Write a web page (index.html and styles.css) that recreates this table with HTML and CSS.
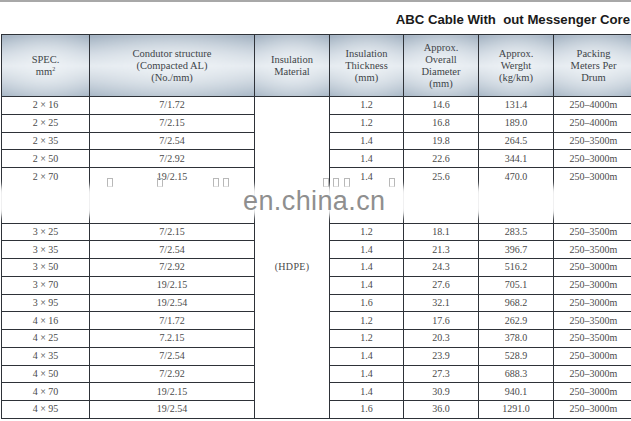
FILE: index.html
```html
<!DOCTYPE html>
<html>
<head>
<meta charset="utf-8">
<link rel="stylesheet" href="styles.css">
</head>
<body>
<div class="page">
  <div class="topline"></div>
  <div class="titlebar"><h1 class="title">ABC Cable With&nbsp; out Messenger Core</h1></div>
  <table class="spec">
    <colgroup>
      <col class="c1"><col class="c2"><col class="c3"><col class="c4"><col class="c5"><col class="c6"><col class="c7">
    </colgroup>
    <thead>
      <tr class="head">
        <th>SPEC.<br>mm<sup>2</sup></th>
        <th>Condutor structure<br>(Compacted AL)<br>(No./mm)</th>
        <th>Insulation<br>Material</th>
        <th>Insulation<br>Thickness<br>(mm)</th>
        <th>Approx.<br>Overall<br>Diameter<br>(mm)</th>
        <th>Approx.<br>Werght<br>(kg/km)</th>
        <th>Packing<br>Meters Per<br>Drum</th>
      </tr>
    </thead>
    <tbody>
      <tr><td>2 × 16</td><td>7/1.72</td><td class="mat" rowspan="17">(HDPE)</td><td>1.2</td><td>14.6</td><td>131.4</td><td>250–4000m</td></tr>
      <tr><td>2 × 25</td><td>7/2.15</td><td>1.2</td><td>16.8</td><td>189.0</td><td>250–4000m</td></tr>
      <tr><td>2 × 35</td><td>7/2.54</td><td>1.4</td><td>19.8</td><td>264.5</td><td>250–3500m</td></tr>
      <tr><td>2 × 50</td><td>7/2.92</td><td>1.4</td><td>22.6</td><td>344.1</td><td>250–3000m</td></tr>
      <tr class="tall"><td>2 × 70</td><td>19/2.15</td><td>1.4</td><td>25.6</td><td>470.0</td><td>250–3000m</td></tr>
      <tr><td>3 × 25</td><td>7/2.15</td><td>1.2</td><td>18.1</td><td>283.5</td><td>250–3500m</td></tr>
      <tr><td>3 × 35</td><td>7/2.54</td><td>1.4</td><td>21.3</td><td>396.7</td><td>250–3500m</td></tr>
      <tr><td>3 × 50</td><td>7/2.92</td><td>1.4</td><td>24.3</td><td>516.2</td><td>250–3000m</td></tr>
      <tr><td>3 × 70</td><td>19/2.15</td><td>1.4</td><td>27.6</td><td>705.1</td><td>250–3000m</td></tr>
      <tr><td>3 × 95</td><td>19/2.54</td><td>1.6</td><td>32.1</td><td>968.2</td><td>250–3000m</td></tr>
      <tr><td>4 × 16</td><td>7/1.72</td><td>1.2</td><td>17.6</td><td>262.9</td><td>250–3500m</td></tr>
      <tr><td>4 × 25</td><td>7.2.15</td><td>1.2</td><td>20.3</td><td>378.0</td><td>250–3500m</td></tr>
      <tr><td>4 × 35</td><td>7/2.54</td><td>1.4</td><td>23.9</td><td>528.9</td><td>250–3000m</td></tr>
      <tr><td>4 × 50</td><td>7/2.92</td><td>1.4</td><td>27.3</td><td>688.3</td><td>250–3000m</td></tr>
      <tr><td>4 × 70</td><td>19/2.15</td><td>1.4</td><td>30.9</td><td>940.1</td><td>250–3000m</td></tr>
      <tr><td>4 × 95</td><td>19/2.54</td><td>1.6</td><td>36.0</td><td>1291.0</td><td>250–3000m</td></tr>
    </tbody>
  </table>
  <div class="band"></div>
  <div class="watermark">en.china.cn</div>
  <span class="tofu" style="left:107px"></span>
  <span class="tofu" style="left:157px"></span>
  <span class="tofu" style="left:213px"></span>
  <span class="tofu" style="left:223px"></span>
  <span class="tofu" style="left:323px"></span>
  <span class="tofu" style="left:333px"></span>
  <span class="tofu" style="left:344px"></span>
  <span class="tofu" style="left:389px"></span>
</div>
</body>
</html>
```
FILE: styles.css
```css
html, body {
  margin: 0;
  padding: 0;
  background: #fff;
}
.page {
  position: relative;
  width: 631px;
  height: 421px;
  overflow: hidden;
}
.topline {
  height: 2px;
  background: #a8a8a8;
}
.titlebar {
  height: 32px;
  display: flex;
  justify-content: flex-end;
  align-items: flex-start;
}
.title {
  margin: 10px 1px 0 0;
  font-family: "Liberation Sans", Arial, sans-serif;
  font-weight: bold;
  font-size: 13.2px;
  line-height: 16px;
  color: #1a1a1a;
  white-space: nowrap;
}
.spec {
  margin-left: 1px;
  border-collapse: collapse;
  table-layout: fixed;
  width: 632px;
  font-family: "Liberation Serif", "Times New Roman", serif;
  color: #3a3a3a;
}
.c1 { width: 88px; }
.c2 { width: 165px; }
.c3 { width: 75px; }
.c4 { width: 74px; }
.c5 { width: 75px; }
.c6 { width: 75px; }
.c7 { width: 80px; }
.spec th, .spec td {
  border: 1px solid #2e3238;
  padding: 0;
  text-align: center;
}
.head th {
  height: 61px;
  font-weight: normal;
  font-size: 10.5px;
  line-height: 12px;
  color: #404448;
  background:
    radial-gradient(ellipse 75% 80% at 50% 50%, rgba(240,244,247,0.85) 0%, rgba(240,244,247,0) 100%),
    linear-gradient(to bottom, #9aaabb 0%, #c9d3dd 30%, #e2e8ee 50%, #c7d1db 72%, #a2b2c2 100%);
}
.head th sup {
  font-size: 6px;
  vertical-align: 4px;
  line-height: 0;
}
.spec td {
  height: 16.75px;
  font-family: "Liberation Serif", "Times New Roman", serif;
  font-size: 10px;
  line-height: 12px;
  color: #4a4a4a;
}
.spec tr.tall td {
  height: 51.5px;
  vertical-align: top;
  padding-top: 3px;
}
.spec td.mat {
  vertical-align: top;
  padding-top: 164px;
  font-size: 10px;
  letter-spacing: 0.3px;
}
.band {
  position: absolute;
  left: -10px;
  top: 186px;
  width: 660px;
  height: 30px;
  background: rgba(255,255,255,0.93);
  filter: blur(3px);
}
.watermark {
  position: absolute;
  left: 243px;
  top: 186px;
  font-family: "Liberation Sans", Arial, sans-serif;
  font-size: 27px;
  line-height: 30px;
  color: #8f8f8f;
  letter-spacing: 0.4px;
}
.tofu {
  position: absolute;
  top: 178px;
  width: 4px;
  height: 7px;
  border: 1px solid #b8b8b8;
  border-bottom-color: #e0e0e0;
}
```
